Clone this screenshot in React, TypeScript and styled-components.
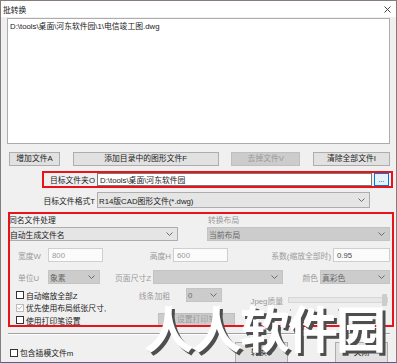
import React from 'react';
import styled, { createGlobalStyle } from 'styled-components';

const GlobalStyle = createGlobalStyle`
  html, body {
    margin: 0;
    padding: 0;
    background: #f0f0f0;
  }
  body {
    font-family: "Liberation Sans", "Noto Sans CJK SC", sans-serif;
    font-size: 7.8px;
    color: #1a1a1a;
  }
  * {
    box-sizing: border-box;
  }
`;

function Chevron() {
  return (
    <svg width="7" height="4" viewBox="0 0 7 4">
      <polyline points="0.5,0.5 3.5,3.5 6.5,0.5" fill="none" stroke="#606060" strokeWidth="0.9" />
    </svg>
  );
}

function CloseIcon() {
  return (
    <svg width="7" height="7" viewBox="0 0 7 7">
      <path d="M0.5 0.5 L6.5 6.5 M6.5 0.5 L0.5 6.5" stroke="#333" strokeWidth="0.9" />
    </svg>
  );
}

function Check({ checked, disabled, label, indent }: { checked?: boolean; disabled?: boolean; label: string; indent?: number }) {
  return (
    <CheckRow $indent={indent}>
      <Box $disabled={disabled}>
        {checked && (
          <svg width="6" height="5" viewBox="0 0 6 5">
            <polyline points="0.5,2.5 2.2,4.2 5.5,0.6" fill="none" stroke="#a8a8a8" strokeWidth="0.9" />
          </svg>
        )}
      </Box>
      <span>{label}</span>
    </CheckRow>
  );
}

function Combo({ w, h, disabled, children }: { w: number; h?: number; disabled?: boolean; children?: React.ReactNode }) {
  return (
    <Select $w={w} $h={h} $disabled={disabled}>
      <span>{children}</span>
      <Chevron />
    </Select>
  );
}

export default function App() {
  return (
    <>
      <GlobalStyle />
      <Window>
        <TitleBar>
          <span>批转换</span>
          <CloseIcon />
        </TitleBar>
        <Body>
          <FileList>{'D:\\tools\\桌面\\河东软件园\\1\\电信竣工图.dwg'}</FileList>

          <ButtonRow>
            <Button $w={51}>增加文件A</Button>
            <Button $w={146}>添加目录中的图形文件F</Button>
            <Button $w={69} $disabled>去掉文件V</Button>
            <Button $w={77}>清除全部文件I</Button>
          </ButtonRow>

          <TargetFrame>
            <Label $w={51} $align="right">目标文件夹O</Label>
            <PathInput>{'D:\\tools\\桌面\\河东软件园'}</PathInput>
            <BrowseButton>...</BrowseButton>
          </TargetFrame>

          <FormatRow>
            <Label $w={88} $align="right">目标文件格式T</Label>
            <Combo w={273} h={16}>R14版CAD图形文件(*.dwg)</Combo>
          </FormatRow>

          <Group>
            <Row $h={12} $top={1}>
              <Label $w={200} $pad={1}>同名文件处理</Label>
              <Label $muted>转换布局</Label>
            </Row>
            <Row $top={2}>
              <Combo w={170}>自动生成文件名</Combo>
              <Spacer $w={29} />
              <Combo w={183} disabled>当前布局</Combo>
            </Row>
            <Row $top={7}>
              <Label $w={38} $pad={10} $muted>宽度W</Label>
              <Spacer $w={2} />
              <Field $w={55}>800</Field>
              <Label $w={68} $align="right" $muted>高度H</Label>
              <Spacer $w={2} />
              <Field $w={55}>600</Field>
              <Label $w={103} $align="right" $muted>系数(缩放全部时)</Label>
              <Spacer $w={2} />
              <Field $w={57} $dark>0.95</Field>
            </Row>
            <Row $top={8}>
              <Label $w={38} $pad={10} $muted>单位U</Label>
              <Spacer $w={2} />
              <Combo w={52} disabled>象素</Combo>
              <Label $w={51} $align="right" $muted>页面尺寸Z</Label>
              <Spacer $w={2} />
              <Combo w={130} disabled />
              <Label $w={35} $align="right" $muted>颜色</Label>
              <Spacer $w={2} />
              <Combo w={70} disabled>真彩色</Combo>
            </Row>
            <LowerGrid>
              <ZoomCheck>
                <Check label="自动缩放全部Z" indent={8} />
              </ZoomCheck>
              <LineLabel>线条加粗</LineLabel>
              <LineCombo>
                <Combo w={36} disabled>0</Combo>
              </LineCombo>
              <JpegLabel>Jpeg质量</JpegLabel>
              <Slider>
                <Track />
                <Thumb />
                <Ticks />
              </Slider>
              <PaperCheck>
                <Check checked disabled label="优先使用布局纸张尺寸," indent={8} />
              </PaperCheck>
              <PenCheck>
                <Check label="使用打印笔设置" indent={8} />
              </PenCheck>
              <PenButton>
                <Button $w={77} $h={14} $disabled>设置打印笔</Button>
              </PenButton>
            </LowerGrid>
          </Group>

          <Separator />

          <BottomRow>
            <Check label="包含插模文件m" indent={3} />
            <Button $w={53} $h={21} $push>转换S</Button>
            <Button $w={53} $h={21}>关闭</Button>
          </BottomRow>
        </Body>

        <Watermark>人人软件园</Watermark>
      </Window>
    </>
  );
}

const Window = styled.div`
  position: relative;
  width: 397px;
  height: 363px;
  overflow: hidden;
  display: flex;
  flex-direction: column;
  background: #f0f0f0;
  border: 1px solid #877c7c;
  border-bottom-color: #4e6186;
`;

const TitleBar = styled.div`
  height: 16px;
  flex: none;
  display: flex;
  align-items: center;
  justify-content: space-between;
  padding: 0 5px 0 2px;
  background: #ffffff;
`;

const Body = styled.div`
  flex: 1;
  display: flex;
  flex-direction: column;
  padding: 0 6px;
`;

const FileList = styled.div`
  margin-top: 1px;
  height: 126px;
  padding: 2px 2px;
  line-height: 12px;
  background: #ffffff;
  border: 1px solid #acacac;
  white-space: nowrap;
`;

const ButtonRow = styled.div`
  margin-top: 8px;
  padding-left: 2px;
  display: flex;
  justify-content: space-between;
`;

const Button = styled.button<{ $w: number; $h?: number; $disabled?: boolean; $push?: boolean }>`
  width: ${p => p.$w}px;
  height: ${p => p.$h ?? 14}px;
  flex: none;
  margin-left: ${p => (p.$push ? 'auto' : '0')};
  padding: 0;
  font: inherit;
  line-height: 12px;
  white-space: nowrap;
  border: 1px solid ${p => (p.$disabled ? '#bfbfbf' : '#adadad')};
  background: ${p => (p.$disabled ? '#cccccc' : '#e1e1e1')};
  color: ${p => (p.$disabled ? '#9a9a9a' : '#1a1a1a')};
`;

const TargetFrame = styled.div`
  margin: 5px -3px 0 35px;
  height: 17px;
  display: flex;
  align-items: stretch;
  gap: 2px;
  padding-right: 2px;
  border: 2px solid #e8141a;
`;

const Label = styled.span<{ $w?: number; $align?: 'left' | 'right'; $pad?: number; $muted?: boolean }>`
  ${p => (p.$w ? `width: ${p.$w}px; flex: none;` : '')}
  padding-left: ${p => p.$pad ?? 0}px;
  text-align: ${p => p.$align ?? 'left'};
  align-self: center;
  white-space: nowrap;
  color: ${p => (p.$muted ? '#9a9a9a' : '#1a1a1a')};
`;

const PathInput = styled.div`
  width: 275px;
  display: flex;
  align-items: center;
  padding-left: 2px;
  background: #ffffff;
  border: 1px solid #7a7a7a;
  white-space: nowrap;
`;

const BrowseButton = styled.div`
  width: 15px;
  display: flex;
  align-items: center;
  justify-content: center;
  border: 1px solid #0078d7;
  background: #e5f1fb;
  font-size: 7px;
  line-height: 1;
`;

const FormatRow = styled.div`
  margin-top: 4px;
  display: flex;
  align-items: center;
  gap: 2px;
`;

const Select = styled.div<{ $w: number; $h?: number; $disabled?: boolean }>`
  width: ${p => p.$w}px;
  height: ${p => p.$h ?? 14}px;
  flex: none;
  display: flex;
  align-items: center;
  justify-content: space-between;
  padding: 0 4px 0 1px;
  white-space: nowrap;
  border: 1px solid ${p => (p.$disabled ? '#c4c4c4' : '#adadad')};
  background: ${p => (p.$disabled ? '#cccccc' : '#e5e5e5')};
  color: ${p => (p.$disabled ? '#6a6a6a' : '#1a1a1a')};
`;

const Group = styled.div`
  position: relative;
  margin: 4px -4px 0 1px;
  display: flex;
  flex-direction: column;

  &::after {
    content: '';
    position: absolute;
    left: 0;
    top: 0;
    right: 0;
    height: 111px;
    border: 2px solid #e8141a;
    pointer-events: none;
  }
`;

const Row = styled.div<{ $h?: number; $top: number }>`
  height: ${p => p.$h ?? 14}px;
  margin-top: ${p => p.$top}px;
  display: flex;
  align-items: stretch;
`;

const Spacer = styled.span<{ $w?: number }>`
  width: ${p => p.$w ?? 0}px;
  flex: none;
`;

const Field = styled.div<{ $w: number; $dark?: boolean }>`
  width: ${p => p.$w}px;
  flex: none;
  display: flex;
  align-items: center;
  padding-left: 3px;
  background: #fbfbfb;
  border: 1px solid #cfcfcf;
  color: ${p => (p.$dark ? '#4a4a4a' : '#9a9a9a')};
`;

const LowerGrid = styled.div`
  margin-top: 4px;
  display: grid;
  grid-template-columns: 122px 40px 16px 36px 61px 5px 100px;
  grid-template-rows: 14px 11px 14px;
  align-items: center;
`;

const CheckRow = styled.label<{ $indent?: number }>`
  display: flex;
  align-items: center;
  gap: 2px;
  padding-left: ${p => p.$indent ?? 0}px;
  white-space: nowrap;
`;

const Box = styled.span<{ $disabled?: boolean }>`
  width: 8px;
  height: 8px;
  flex: none;
  display: inline-flex;
  align-items: center;
  justify-content: center;
  background: #ffffff;
  border: 1px solid ${p => (p.$disabled ? '#bcbcbc' : '#333333')};
`;

const ZoomCheck = styled.div`
  grid-row: 1;
  grid-column: 1;
`;

const LineLabel = styled.span`
  grid-row: 1;
  grid-column: 2;
  justify-self: end;
  white-space: nowrap;
  color: #9a9a9a;
`;

const LineCombo = styled.div`
  grid-row: 1;
  grid-column: 4;
  display: flex;
`;

const JpegLabel = styled.span`
  grid-row: 1 / 3;
  grid-column: 5;
  justify-self: end;
  color: #9a9a9a;
  white-space: nowrap;
`;

const Slider = styled.div`
  grid-row: 1 / 3;
  grid-column: 7;
  position: relative;
  height: 22px;
  margin-top: 6px;
`;

const Track = styled.div`
  position: absolute;
  left: 0;
  right: 0;
  top: 4px;
  height: 6px;
  background: #e7e7e7;
  border: 1px solid #d6d6d6;
`;

const Thumb = styled.div`
  position: absolute;
  right: 1px;
  top: 1px;
  width: 5px;
  height: 12px;
  background: #cccccc;
  border-radius: 1px;
`;

const Ticks = styled.div`
  position: absolute;
  left: 2px;
  right: 2px;
  top: 16px;
  height: 2px;
  background: repeating-linear-gradient(90deg, #b0b0b0 0 1px, transparent 1px 24px);
`;

const PaperCheck = styled.div`
  grid-row: 2;
  grid-column: 1 / 5;
`;

const PenCheck = styled.div`
  grid-row: 3;
  grid-column: 1;
`;

const PenButton = styled.div`
  grid-row: 3;
  grid-column: 2 / 6;
  padding-left: 28px;
  display: flex;
`;

const Separator = styled.div`
  margin: 6px 0 0 1px;
  height: 2px;
  border-top: 1px solid #a0a0a0;
  border-bottom: 1px solid #ffffff;
`;

const BottomRow = styled.div`
  margin-top: 7px;
  padding-right: 2px;
  display: flex;
  align-items: center;
  gap: 47px;
`;

const Watermark = styled.div`
  position: absolute;
  left: 143px;
  top: 300px;
  font-family: "Noto Sans CJK SC", sans-serif;
  font-weight: 700;
  font-size: 50px;
  line-height: 1;
  letter-spacing: -2px;
  color: #ffffff;
  text-shadow: 3px 3px 0 #4e4e4e;
  white-space: nowrap;
  pointer-events: none;
`;
